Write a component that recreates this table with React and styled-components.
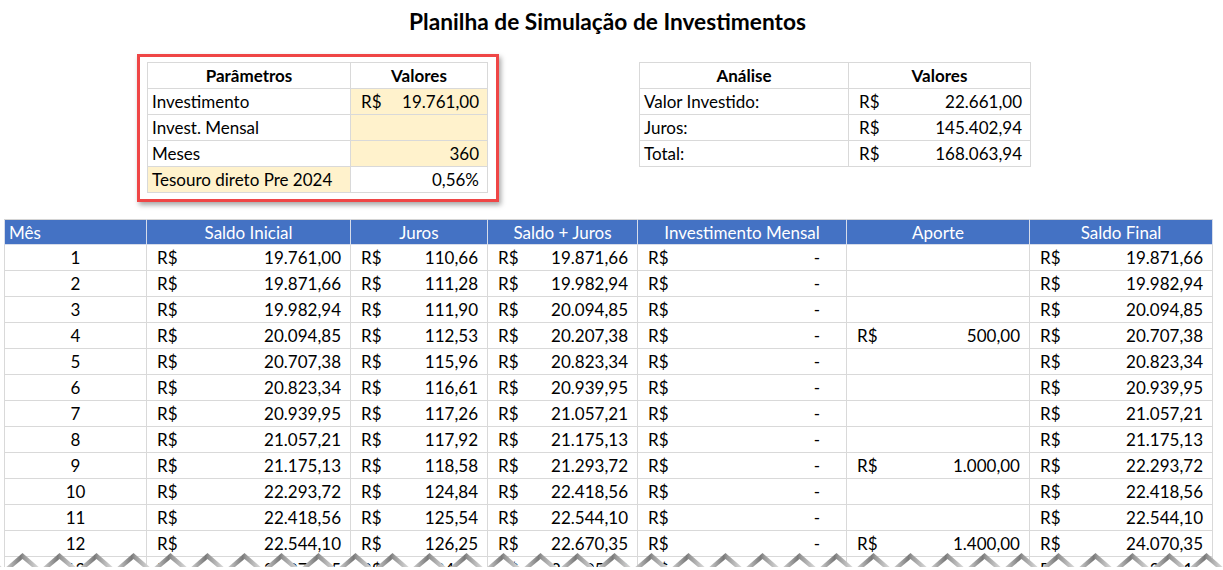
import React from 'react';
import styled, { createGlobalStyle } from 'styled-components';

const GlobalStyle = createGlobalStyle`
  html, body {
    margin: 0;
    padding: 0;
    background: #ffffff;
  }
  body {
    font-family: Lato, "Open Sans", sans-serif;
    color: #000;
  }
`;

const rows = [
  [1, '19.761,00', '110,66', '19.871,66', '', '19.871,66'],
  [2, '19.871,66', '111,28', '19.982,94', '', '19.982,94'],
  [3, '19.982,94', '111,90', '20.094,85', '', '20.094,85'],
  [4, '20.094,85', '112,53', '20.207,38', '500,00', '20.707,38'],
  [5, '20.707,38', '115,96', '20.823,34', '', '20.823,34'],
  [6, '20.823,34', '116,61', '20.939,95', '', '20.939,95'],
  [7, '20.939,95', '117,26', '21.057,21', '', '21.057,21'],
  [8, '21.057,21', '117,92', '21.175,13', '', '21.175,13'],
  [9, '21.175,13', '118,58', '21.293,72', '1.000,00', '22.293,72'],
  [10, '22.293,72', '124,84', '22.418,56', '', '22.418,56'],
  [11, '22.418,56', '125,54', '22.544,10', '', '22.544,10'],
  [12, '22.544,10', '126,25', '22.670,35', '1.400,00', '24.070,35'],
  [13, '24.070,35', '134,79', '24.205,14', '', '24.205,14'],
];

const mainCols = [142, 204, 137, 150, 209, 183, 183];
const mainHeaders = ['Mês', 'Saldo Inicial', 'Juros', 'Saldo + Juros', 'Investimento Mensal', 'Aporte', 'Saldo Final'];

const Money = ({ value, dash }) => (
  <MoneyWrap>
    <span>R$</span>
    <MoneyValue $dash={dash}>{dash ? '-' : value}</MoneyValue>
  </MoneyWrap>
);

// the "torn paper" edge at the bottom of the screenshot
const TornEdge = () => {
  const teeth = [];
  const step = 37;
  for (let i = -1; i < 35; i++) {
    const x = 4 + i * step;
    teeth.push(
      <g key={i}>
        <polygon points={`${x},17 ${x + step / 2},1 ${x + step},17`} fill="url(#tooth)" />
        <polygon points={`${x + 3},20 ${x + step / 2},7 ${x + step - 3},20`} fill="#ffffff" />
      </g>
    );
  }
  return (
    <EdgeSvg width="1223" height="18" viewBox="0 0 1223 18">
      <defs>
        <linearGradient id="tooth" x1="0" y1="0" x2="1" y2="0">
          <stop offset="0" stopColor="#d8d8d8" />
          <stop offset="0.45" stopColor="#7a7a7a" />
          <stop offset="0.55" stopColor="#9a9a9a" />
          <stop offset="1" stopColor="#e6e6e6" />
        </linearGradient>
      </defs>
      {teeth}
      <rect x="0" y="15" width="1223" height="3" fill="#ffffff" />
    </EdgeSvg>
  );
};

const App = () => {
  return (
    <>
      <GlobalStyle />
      <Sheet>
        <Title>Planilha de Simulação de Investimentos</Title>
        <TopRow>
          <Highlight>
            <SmallTable $width={340}>
              <colgroup>
                <col style={{ width: 203 }} />
                <col style={{ width: 137 }} />
              </colgroup>
              <tbody>
                <tr>
                  <HeadCell>Parâmetros</HeadCell>
                  <HeadCell>Valores</HeadCell>
                </tr>
                <tr>
                  <LabelCell>Investimento</LabelCell>
                  <ValueCell $fill>
                    <Money value="19.761,00" />
                  </ValueCell>
                </tr>
                <tr>
                  <LabelCell>Invest. Mensal</LabelCell>
                  <ValueCell $fill />
                </tr>
                <tr>
                  <LabelCell>Meses</LabelCell>
                  <ValueCell $fill $right>360</ValueCell>
                </tr>
                <tr>
                  <LabelCell $fill>Tesouro direto Pre 2024</LabelCell>
                  <ValueCell $right>0,56%</ValueCell>
                </tr>
              </tbody>
            </SmallTable>
          </Highlight>
          <AnalysisBox>
            <SmallTable $width={391}>
              <colgroup>
                <col style={{ width: 209 }} />
                <col style={{ width: 182 }} />
              </colgroup>
              <tbody>
                <tr>
                  <HeadCell>Análise</HeadCell>
                  <HeadCell>Valores</HeadCell>
                </tr>
                <tr>
                  <LabelCell>Valor Investido:</LabelCell>
                  <ValueCell>
                    <Money value="22.661,00" />
                  </ValueCell>
                </tr>
                <tr>
                  <LabelCell>Juros:</LabelCell>
                  <ValueCell>
                    <Money value="145.402,94" />
                  </ValueCell>
                </tr>
                <tr>
                  <LabelCell>Total:</LabelCell>
                  <ValueCell>
                    <Money value="168.063,94" />
                  </ValueCell>
                </tr>
              </tbody>
            </SmallTable>
          </AnalysisBox>
        </TopRow>
        <MainTable>
          <colgroup>
            {mainCols.map((w, i) => (
              <col key={i} style={{ width: w }} />
            ))}
          </colgroup>
          <thead>
            <tr>
              {mainHeaders.map((h, i) => (
                <BlueHead key={h} $left={i === 0}>
                  {h}
                </BlueHead>
              ))}
            </tr>
          </thead>
          <tbody>
            {rows.map(([mes, inicial, juros, saldoJuros, aporte, final]) => (
              <tr key={mes}>
                <MonthCell>{mes}</MonthCell>
                <DataCell>
                  <Money value={inicial} />
                </DataCell>
                <DataCell>
                  <Money value={juros} />
                </DataCell>
                <DataCell>
                  <Money value={saldoJuros} />
                </DataCell>
                <DataCell>
                  <Money dash />
                </DataCell>
                <DataCell>{aporte && <Money value={aporte} />}</DataCell>
                <DataCell>
                  <Money value={final} />
                </DataCell>
              </tr>
            ))}
          </tbody>
        </MainTable>
        <TornEdge />
      </Sheet>
    </>
  );
};

export default App;

const Sheet = styled.div`
  position: relative;
  width: 1223px;
  height: 570px;
  overflow: hidden;
  background: #fff;
`;

const Title = styled.h1`
  margin: 0;
  height: 42px;
  display: flex;
  align-items: center;
  justify-content: center;
  font-size: 22.7px;
  font-weight: 700;
  padding-right: 8px;
`;

const TopRow = styled.div`
  display: flex;
  align-items: flex-start;
  margin-top: 12px;
  padding-left: 137px;
`;

const Highlight = styled.div`
  border: 3px solid #ef4646;
  padding: 5px 8px 6px 7px;
  box-shadow: 2px 3px 5px rgba(0, 0, 0, 0.35);
  background: #fff;
`;

const AnalysisBox = styled.div`
  margin-left: 140px;
  margin-top: 8px;
`;

const SmallTable = styled.table`
  width: ${(p) => p.$width}px;
  table-layout: fixed;
  border-collapse: collapse;
  font-size: 17px;
`;

const HeadCell = styled.td`
  height: 25px;
  padding: 0 4px;
  border: 1px solid #d9d9d9;
  text-align: center;
  font-weight: 700;
`;

const LabelCell = styled.td`
  height: 25px;
  padding: 0 4px;
  border: 1px solid #d9d9d9;
  white-space: nowrap;
  background: ${(p) => (p.$fill ? '#fff2cc' : '#fff')};
`;

const ValueCell = styled.td`
  height: 25px;
  padding: 0 8px 0 10px;
  border: 1px solid #d9d9d9;
  text-align: ${(p) => (p.$right ? 'right' : 'left')};
  background: ${(p) => (p.$fill ? '#fff2cc' : '#fff')};
`;

const MoneyWrap = styled.div`
  display: flex;
  justify-content: space-between;
  align-items: center;
  white-space: nowrap;
`;

const MoneyValue = styled.span`
  padding-right: ${(p) => (p.$dash ? '17px' : '0')};
`;

const MainTable = styled.table`
  margin-top: 17px;
  margin-left: 4px;
  width: 1208px;
  table-layout: fixed;
  border-collapse: collapse;
  font-size: 17px;
`;

const BlueHead = styled.th`
  height: 24px;
  padding: 0 4px;
  background: #4472c4;
  color: #fff;
  font-weight: 400;
  text-align: ${(p) => (p.$left ? 'left' : 'center')};
  border: 1px solid #d6dcea;
  border-top-color: #d4d4d4;
`;

const MonthCell = styled.td`
  height: 25px;
  padding: 0 4px;
  border: 1px solid #d9d9d9;
  text-align: center;
`;

const DataCell = styled.td`
  height: 25px;
  padding: 0 9px 0 10px;
  border: 1px solid #d9d9d9;
`;

const EdgeSvg = styled.svg`
  position: absolute;
  left: 0;
  bottom: 0;
  display: block;
`;
